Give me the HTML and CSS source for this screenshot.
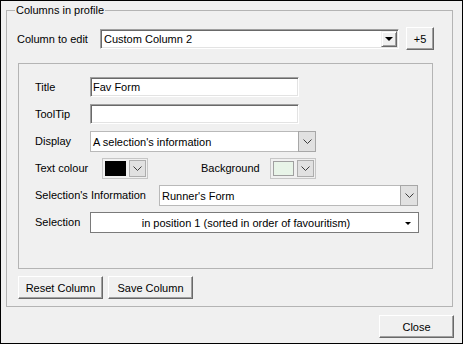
FILE: index.html
```html
<!DOCTYPE html>
<html>
<head>
<meta charset="utf-8">
<link rel="stylesheet" href="styles.css">
</head>
<body>
<div class="win">
  <div class="group">
    <span class="legend">Columns in profile</span>
    <div class="edit-row">
      <span class="lbl-edit">Column to edit</span>
      <div class="combo3d">
        <span class="ctext">Custom Column 2</span>
        <span class="dd3d"><span class="tri"></span></span>
      </div>
      <div class="btn btn-plus">+5</div>
    </div>
    <div class="panel">
      <div class="frow">
        <span class="lbl w55">Title</span>
        <div class="tb w209"><span class="ctext">Fav Form</span></div>
      </div>
      <div class="frow">
        <span class="lbl w55">ToolTip</span>
        <div class="tb w209"></div>
      </div>
      <div class="frow">
        <span class="lbl w55">Display</span>
        <div class="flatcombo w226">
          <span class="ctext">A selection's information</span>
          <span class="fbtn"><svg width="9" height="5" viewBox="0 0 9 5"><polyline points="0.5,0.5 4.5,4.5 8.5,0.5" fill="none" stroke="#3c3c3c" stroke-width="1"/></svg></span>
        </div>
      </div>
      <div class="frow">
        <span class="lbl w67">Text colour</span>
        <div class="cbox">
          <span class="swatch black"></span>
          <span class="cbtn"><svg width="9" height="5" viewBox="0 0 9 5"><polyline points="0.5,0.5 4.5,4.5 8.5,0.5" fill="none" stroke="#3c3c3c" stroke-width="1"/></svg></span>
        </div>
        <span class="lbl lbl-bg">Background</span>
        <div class="cbox">
          <span class="swatch mint"></span>
          <span class="cbtn"><svg width="9" height="5" viewBox="0 0 9 5"><polyline points="0.5,0.5 4.5,4.5 8.5,0.5" fill="none" stroke="#3c3c3c" stroke-width="1"/></svg></span>
        </div>
      </div>
      <div class="frow">
        <span class="lbl w124">Selection's Information</span>
        <div class="flatcombo w259">
          <span class="ctext">Runner's Form</span>
          <span class="fbtn"><svg width="9" height="5" viewBox="0 0 9 5"><polyline points="0.5,0.5 4.5,4.5 8.5,0.5" fill="none" stroke="#3c3c3c" stroke-width="1"/></svg></span>
        </div>
      </div>
      <div class="frow">
        <span class="lbl w55">Selection</span>
        <div class="listcombo">
          <span class="ltext">in position 1 (sorted in order of favouritism)</span>
          <span class="smalltri"></span>
        </div>
      </div>
    </div>
    <div class="btn-row">
      <div class="btn btn-col">Reset Column</div>
      <div class="btn btn-col">Save Column</div>
    </div>
  </div>
  <div class="btn btn-close">Close</div>
</div>
</body>
</html>
```

FILE: styles.css
```css
html, body {
  margin: 0;
  padding: 0;
  background: #f0f0f0;
}
body {
  font-family: "Liberation Sans", Arial, sans-serif;
  font-size: 11px;
  color: #000;
}
.win {
  width: 463px;
  height: 344px;
  box-sizing: border-box;
  border: 1px solid #000;
  background: #f0f0f0;
  display: flex;
  flex-direction: column;
}
.group {
  position: relative;
  margin: 9px 0 0 5px;
  width: 447px;
  height: 297px;
  box-sizing: border-box;
  border: 1px solid #b4b4b4;
}
.legend {
  position: absolute;
  top: -7px;
  left: 8px;
  padding: 0 1px;
  line-height: 13px;
  background: #f0f0f0;
}
.edit-row {
  display: flex;
  align-items: center;
  height: 23px;
  margin-top: 16px;
  padding-left: 10px;
}
.lbl-edit {
  width: 83px;
}
.combo3d, .tb {
  box-sizing: border-box;
  height: 20px;
  background: #fff;
  border: 1px solid;
  border-color: #a0a0a0 #fff #fff #a0a0a0;
  box-shadow: inset 1px 1px #696969, inset -1px -1px #e3e3e3;
  display: flex;
  align-items: center;
}
.combo3d {
  width: 299px;
  padding: 1px;
}
.ctext {
  padding-left: 2px;
  white-space: nowrap;
}
.dd3d {
  margin-left: auto;
  width: 16px;
  height: 16px;
  box-sizing: border-box;
  background: #f0f0f0;
  border: 1px solid;
  border-color: #f0f0f0 #696969 #696969 #f0f0f0;
  box-shadow: inset 1px 1px #fff, inset -1px -1px #a0a0a0;
  display: flex;
  align-items: center;
  justify-content: center;
}
.tri {
  width: 0;
  height: 0;
  border-left: 4px solid transparent;
  border-right: 4px solid transparent;
  border-top: 4px solid #000;
  margin-top: 1px;
}
.btn {
  box-sizing: border-box;
  height: 23px;
  background: #f0f0f0;
  border: 1px solid;
  border-color: #fff #696969 #696969 #fff;
  box-shadow: inset -1px -1px #a0a0a0;
  display: flex;
  align-items: center;
  justify-content: center;
  white-space: nowrap;
}
.btn-plus {
  width: 28px;
  margin-left: 7px;
}
.panel {
  margin: 13px 0 0 11px;
  width: 415px;
  height: 206px;
  box-sizing: border-box;
  border: 1px solid #b4b4b4;
  padding: 13px 0 0 16px;
  display: flex;
  flex-direction: column;
  gap: 6px;
}
.frow {
  display: flex;
  align-items: flex-start;
  height: 21px;
}
.lbl {
  line-height: 20px;
  white-space: nowrap;
  flex: none;
}
.w55 { width: 55px; }
.w67 { width: 67px; }
.w124 { width: 124px; }
.w209 { width: 209px; }
.w226 { width: 226px; }
.w259 { width: 259px; }
.lbl-bg {
  width: 69px;
  margin-left: 53px;
}
.flatcombo {
  box-sizing: border-box;
  height: 21px;
  background: #fff;
  border: 1px solid #b9b9b9;
  display: flex;
  align-items: center;
}
.fbtn {
  margin-left: auto;
  align-self: stretch;
  width: 16px;
  margin-right: -1px;
  margin-top: -1px;
  margin-bottom: -1px;
  background: #e1e1e1;
  border: 1px solid #a7a7a7;
  display: flex;
  align-items: center;
  justify-content: center;
}
.cbox {
  box-sizing: border-box;
  width: 46px;
  height: 21px;
  border: 1px solid #c6c6c6;
  padding: 1px;
  display: flex;
  align-items: center;
  gap: 3px;
}
.swatch {
  box-sizing: border-box;
  width: 21px;
  height: 15px;
  margin-left: 1px;
  border: 1px solid #a0a0a0;
}
.black {
  background: #000;
  border-color: #000;
}
.mint {
  background: #e8f4e8;
}
.cbtn {
  box-sizing: border-box;
  width: 17px;
  height: 17px;
  background: #e1e1e1;
  border: 1px solid #adadad;
  display: flex;
  align-items: center;
  justify-content: center;
}
.listcombo {
  box-sizing: border-box;
  width: 329px;
  height: 21px;
  background: #fff;
  border: 1px solid #7a7a7a;
  display: flex;
  align-items: center;
}
.ltext {
  flex: 1;
  text-align: center;
  white-space: nowrap;
  padding-left: 2px;
}
.smalltri {
  width: 0;
  height: 0;
  border-left: 3px solid transparent;
  border-right: 3px solid transparent;
  border-top: 3px solid #000;
  margin: 1px 7px 0 6px;
}
.btn-row {
  display: flex;
  gap: 5px;
  margin: 7px 0 0 11px;
}
.btn-col {
  width: 85px;
}
.btn-close {
  width: 75px;
  align-self: flex-end;
  margin: 8px 8px 0 0;
}
```
